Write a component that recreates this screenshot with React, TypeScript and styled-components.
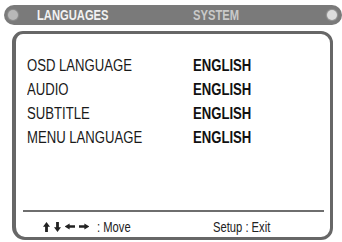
import React from 'react'
import styled, { createGlobalStyle } from 'styled-components'

const rows = [
  { label: 'OSD LANGUAGE', value: 'ENGLISH' },
  { label: 'AUDIO', value: 'ENGLISH' },
  { label: 'SUBTITLE', value: 'ENGLISH' },
  { label: 'MENU LANGUAGE', value: 'ENGLISH' },
]

const Arrow = ({ dir }: { dir: 'up' | 'down' | 'left' | 'right' }) => {
  const rot = { up: 0, down: 180, left: 270, right: 90 }[dir]
  const horiz = dir === 'left' || dir === 'right'
  return (
    <ArrowIcon width={horiz ? 10 : 7} height={horiz ? 7 : 10} viewBox="0 0 8 9" preserveAspectRatio="none">
      <g transform={`rotate(${rot} 4 4.5)`}>
        <path d="M4 0 L8 4.2 L5.6 4.2 L5.6 9 L2.4 9 L2.4 4.2 L0 4.2 Z" fill="#222" />
      </g>
    </ArrowIcon>
  )
}

const App = () => {
  return (
    <Screen>
      <GlobalStyle />
      <TabBar>
        <Dot />
        <Tab active>
          <Narrow scale={0.8}>LANGUAGES</Narrow>
        </Tab>
        <Tab>
          <Narrow scale={0.8}>SYSTEM</Narrow>
        </Tab>
        <Dot right />
      </TabBar>
      <Frame>
        <List>
          {rows.map((r) => (
            <Row key={r.label}>
              <Label>
                <Narrow>{r.label}</Narrow>
              </Label>
              <Value>
                <Narrow>{r.value}</Narrow>
              </Value>
            </Row>
          ))}
        </List>
        <Divider />
        <Footer>
          <Hint width={170}>
            <Arrows>
              <Arrow dir="up" />
              <Arrow dir="down" />
              <Arrow dir="left" />
              <Arrow dir="right" />
            </Arrows>
            <Narrow scale={0.8}>: Move</Narrow>
          </Hint>
          <Hint>
            <Narrow scale={0.8}>Setup : Exit</Narrow>
          </Hint>
        </Footer>
      </Frame>
    </Screen>
  )
}

export default App

const GlobalStyle = createGlobalStyle`
  body {
    margin: 0;
    background: #fff;
  }
`

const Screen = styled.div`
  width: 342px;
  height: 242px;
  padding: 5px 0 0 4px;
  box-sizing: border-box;
  font-family: 'Liberation Sans', Arial, sans-serif;
  background: #fff;
  overflow: hidden;
`

const Narrow = styled.span<{ scale?: number }>`
  display: inline-block;
  white-space: nowrap;
  transform: scaleX(${(p) => p.scale ?? 0.82});
  transform-origin: left center;
`

const TabBar = styled.div`
  height: 20px;
  border-radius: 10px;
  background: #7a7a7a;
  display: flex;
  align-items: center;
  padding: 0 5px 0 4px;
`

const Dot = styled.div<{ right?: boolean }>`
  width: 10px;
  height: 10px;
  border-radius: 50%;
  background: ${(p) => (p.right ? '#dcdcdc' : '#b8b8b8')};
  box-shadow: 0 0 1px 1px ${(p) => (p.right ? '#9a9a9a' : '#8f8f8f')};
  margin-left: ${(p) => (p.right ? 'auto' : '0')};
`

const Tab = styled.div<{ active?: boolean }>`
  width: ${(p) => (p.active ? '156px' : '80px')};
  margin-left: ${(p) => (p.active ? '19px' : '0')};
  font-weight: 700;
  font-size: 14px;
  color: ${(p) => (p.active ? '#f2f2f2' : '#c9c9c9')};
  line-height: 20px;
`

const Frame = styled.div`
  margin: 6px 9px 0 8px;
  height: 209px;
  box-sizing: border-box;
  border: 3px solid #676767;
  border-left-width: 4px;
  border-radius: 11px 12px 12px 13px;
  display: flex;
  flex-direction: column;
  padding: 0 6px 0 7px;
`

const List = styled.div`
  padding: 20px 0 0 4px;
  flex: 1;
`

const Row = styled.div`
  display: grid;
  grid-template-columns: 166px 1fr;
  height: 24px;
  align-items: center;
`

const Label = styled.div`
  font-size: 16px;
  color: #1a1a1a;
`

const Value = styled.div`
  font-size: 16px;
  font-weight: 700;
  color: #111;
`

const Divider = styled.div`
  height: 2px;
  background: #6e6e6e;
`

const Footer = styled.div`
  height: 25px;
  display: flex;
  align-items: center;
  padding: 4px 0 0 20px;
  box-sizing: border-box;
`

const Hint = styled.div<{ width?: number }>`
  width: ${(p) => (p.width ? `${p.width}px` : 'auto')};
  font-size: 14px;
  color: #222;
  display: flex;
  align-items: center;
  gap: 8px;
`

const Arrows = styled.div`
  display: flex;
  align-items: center;
  gap: 4px;
`

const ArrowIcon = styled.svg`
  display: block;
`
